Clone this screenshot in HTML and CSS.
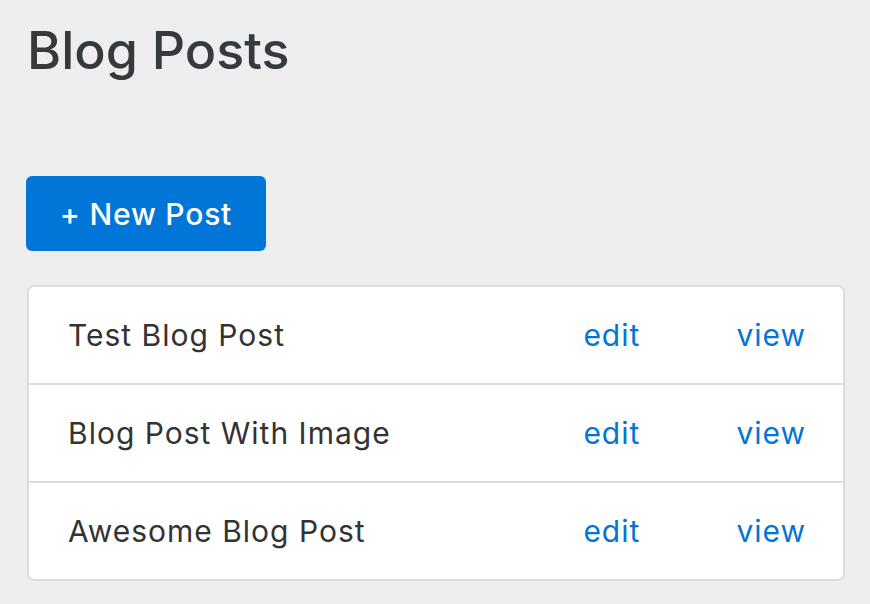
FILE: index.html
```html
<!DOCTYPE html>
<html>
<head>
<meta charset="utf-8">
<link rel="stylesheet" href="styles.css">
</head>
<body>
<main class="page">
  <h1 class="title">Blog Posts</h1>
  <a class="btn-new" href="#">+ New Post</a>
  <ul class="posts">
    <li class="post"><span class="post-name">Test Blog Post</span><a class="link link-edit" href="#">edit</a><a class="link" href="#">view</a></li>
    <li class="post"><span class="post-name">Blog Post With Image</span><a class="link link-edit" href="#">edit</a><a class="link" href="#">view</a></li>
    <li class="post"><span class="post-name">Awesome Blog Post</span><a class="link link-edit" href="#">edit</a><a class="link" href="#">view</a></li>
  </ul>
</main>
</body>
</html>
```

FILE: styles.css
```css
html, body {
  margin: 0;
  padding: 0;
  background: #eeeeee;
}
body {
  font-family: Inter, "Liberation Sans", sans-serif;
  color: #333333;
}
.page {
  padding: 18px 25px 0 27px;
  display: flex;
  flex-direction: column;
  align-items: flex-start;
}
.title {
  margin: 0;
  font-size: 52px;
  font-weight: 500;
  line-height: 66px;
  color: #363a3e;
  letter-spacing: 0;
}
.btn-new {
  margin-top: 92px;
  margin-left: -1px;
  width: 240px;
  height: 75px;
  box-sizing: border-box;
  display: flex;
  align-items: center;
  justify-content: center;
  background: #0275d8;
  color: #ffffff;
  text-decoration: none;
  font-size: 30px;
  font-weight: 500;
  letter-spacing: 0.8px;
  border-radius: 6px;
}
.posts {
  list-style: none;
  margin: 34px 0 0 0;
  padding: 0;
  align-self: stretch;
  background: #ffffff;
  border: 2px solid #dcdcdc;
  border-radius: 7px;
}
.post {
  display: grid;
  grid-template-columns: 1fr 153px auto;
  align-items: center;
  height: 96px;
  padding: 0 37px 0 39px;
}
.post + .post {
  border-top: 2px solid #dcdcdc;
}
.post-name {
  font-size: 30px;
  letter-spacing: 1px;
  color: #333333;
}
.link {
  font-size: 30px;
  letter-spacing: 1px;
  color: #0275d8;
  text-decoration: none;
}
```
